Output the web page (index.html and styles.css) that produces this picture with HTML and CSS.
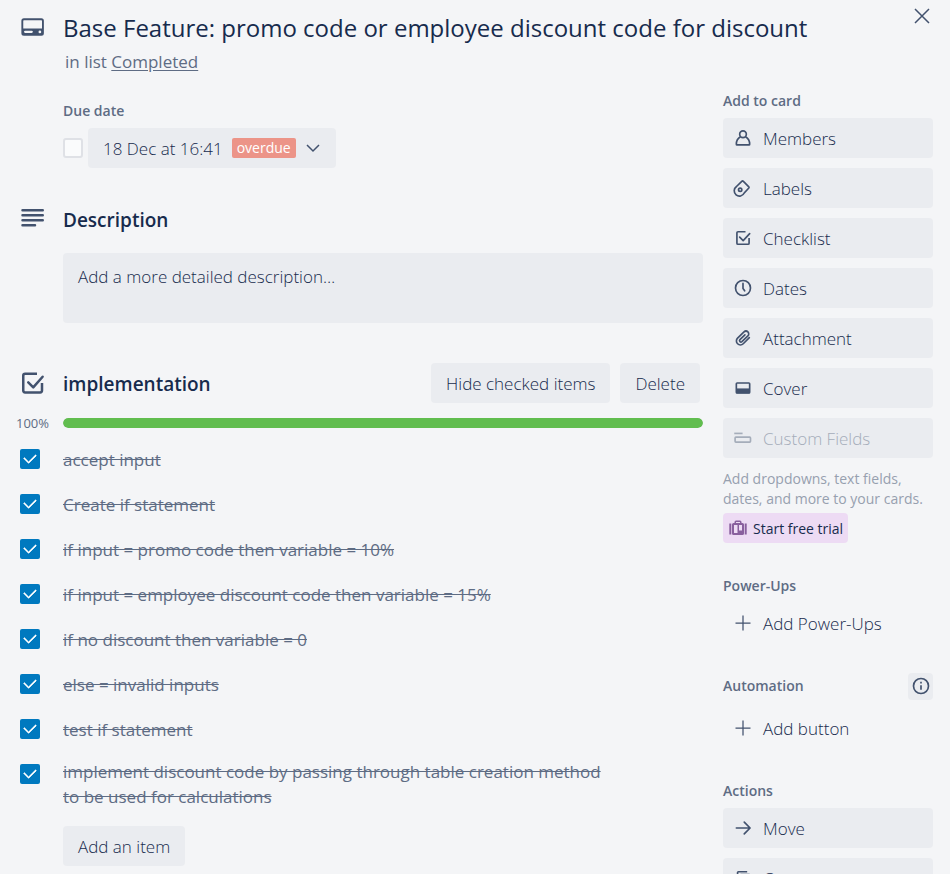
FILE: index.html
```html
<!DOCTYPE html>
<html lang="en">
<head>
<meta charset="utf-8">
<meta name="viewport" content="width=device-width, initial-scale=1">
<title>Base Feature: promo code or employee discount code for discount</title>
<link rel="stylesheet" href="styles.css">
</head>
<body>
<div class="card">
  <header class="card-header">
    <svg class="icon-lg" viewBox="0 0 24 24" aria-hidden="true"><path fill="currentColor" fill-rule="evenodd" d="M5.500 5a2 2 0 0 0-2 2v10a2 2 0 0 0 2 2h14a2 2 0 0 0 2-2V7a2 2 0 0 0-2-2h-14Zm0 1.600h14a.5.5 0 0 1 .5.5v6.100H5V7.100a.5.5 0 0 1 .5-.5ZM6.500 15h5.300a.9.900 0 0 1 0 1.800H6.500a.9.900 0 0 1 0-1.800Zm11.800-.2a1.100 1.100 0 1 1 0 2.200 1.100 1.100 0 0 1 0-2.200Z"/></svg>
    <div class="card-heading">
      <h1>Base Feature: promo code or employee discount code for discount</h1>
      <p class="in-list">in list <a href="#list">Completed</a></p>
    </div>
    <button class="close" type="button" aria-label="Close"><svg viewBox="0 0 16 16"><path d="M1 1l14 14M15 1L1 15"/></svg></button>
  </header>

  <div class="card-body">
    <main class="main">
      <section class="due">
        <h3 class="label">Due date</h3>
        <div class="due-row">
          <input class="check" type="checkbox" aria-label="Mark due date complete">
          <button class="btn due-btn" type="button">18 Dec at 16:41 <span class="badge">overdue</span>
            <svg class="chevron" viewBox="0 0 16 16" aria-hidden="true"><path d="M2 5l6 6 6-6"/></svg></button>
        </div>
      </section>

      <section class="description">
        <div class="section-head">
          <svg class="icon-lg" viewBox="0 0 24 24" aria-hidden="true"><path class="stroke round" d="M4.400 5h16.200M4.400 9h16.200M4.400 13h16.200M4.400 17h10"/></svg>
          <h2><label for="description">Description</label></h2>
        </div>
        <textarea id="description" placeholder="Add a more detailed description…"></textarea>
      </section>

      <section class="checklist">
        <div class="section-head">
          <svg class="icon-lg" viewBox="0 0 24 24" aria-hidden="true"><path class="stroke" d="M16 4.500H6.500A1.500 1.500 0 0 0 5 6v12a1.500 1.500 0 0 0 1.500 1.500h12A1.500 1.500 0 0 0 20 18v-6"/><path class="stroke round" d="M9 11.500l4 4L20.500 7"/></svg>
          <h2>implementation</h2>
          <div class="actions">
            <button class="btn" type="button">Hide checked items</button>
            <button class="btn" type="button">Delete</button>
          </div>
        </div>
        <div class="progress-row">
          <span class="percent">100%</span>
          <div class="track" role="progressbar" aria-label="Checklist progress" aria-valuenow="100"><div class="fill" style="width:100%"></div></div>
        </div>
        <ul class="items">
          <li><input class="check" id="i1" type="checkbox" checked><label for="i1">accept input</label></li>
          <li><input class="check" id="i2" type="checkbox" checked><label for="i2">Create if statement</label></li>
          <li><input class="check" id="i3" type="checkbox" checked><label for="i3">if input = promo code then variable = 10%</label></li>
          <li><input class="check" id="i4" type="checkbox" checked><label for="i4">if input = employee discount code then variable = 15%</label></li>
          <li><input class="check" id="i5" type="checkbox" checked><label for="i5">if no discount then variable = 0</label></li>
          <li><input class="check" id="i6" type="checkbox" checked><label for="i6">else = invalid inputs</label></li>
          <li><input class="check" id="i7" type="checkbox" checked><label for="i7">test if statement</label></li>
          <li class="long"><input class="check" id="i8" type="checkbox" checked><label for="i8">implement discount code by passing through table creation method to be used for calculations</label></li>
        </ul>
        <button class="btn add-item" type="button">Add an item</button>
      </section>
    </main>

    <aside class="sidebar">
      <section>
        <div class="side-head"><h3 class="label">Add to card</h3></div>
        <div class="stack">
          <button class="btn side-btn" type="button"><svg viewBox="0 0 24 24"><circle class="stroke" cx="12" cy="7.500" r="4"/><path class="stroke" d="M9 10.500C5.800 12.300 4 15.500 4 19.400q0 .8.800.800h14.400q.8 0 .8-.8c0-3.900-1.800-7.100-5-8.900"/></svg>Members</button>
          <button class="btn side-btn" type="button"><svg viewBox="0 0 24 24"><path class="stroke" d="M4.200 10.200L10.800 3.700q.7-.6 1.400 0l6.800 6.900q.6.700 0 1.400L13.500 18A6.300 6.300 0 1 1 4.200 10.200Z"/><circle class="stroke" cx="8.600" cy="14.200" r="2"/></svg>Labels</button>
          <button class="btn side-btn" type="button"><svg viewBox="0 0 24 24"><path class="stroke" d="M15 4.500H6A1.300 1.300 0 0 0 4.700 5.800v12.400A1.300 1.300 0 0 0 6 19.500h12a1.300 1.300 0 0 0 1.300-1.300V12"/><path class="stroke round" d="M8 11l4.200 4.200L20 6.700"/></svg>Checklist</button>
          <button class="btn side-btn" type="button"><svg viewBox="0 0 24 24"><circle class="stroke" cx="12" cy="12" r="9"/><path class="stroke round" d="M12 6.500v6l2 2.800"/></svg>Dates</button>
          <button class="btn side-btn" type="button"><svg viewBox="0 0 24 24"><path class="stroke round" d="M19.600 11.600l-7.300 7.300a4.800 4.800 0 0 1-6.800-6.800l7.700-7.400a3.300 3.300 0 0 1 4.700 4.700l-7.200 7a1.700 1.700 0 0 1-2.400-2.400l6-5.800"/></svg>Attachment</button>
          <button class="btn side-btn" type="button"><svg viewBox="0 0 24 24"><rect class="stroke" x="4" y="6" width="16" height="12" rx="1"/><path fill="currentColor" d="M4 12.500h16v6H4z"/></svg>Cover</button>
          <button class="btn side-btn" type="button" disabled><svg viewBox="0 0 24 24"><path class="stroke" d="M1.500 6.500h10"/><rect class="stroke" x="2.500" y="11" width="18.500" height="6" rx="1"/></svg>Custom Fields</button>
        </div>
        <p class="hint">Add dropdowns, text fields, dates, and more to your cards.</p>
        <button class="trial" type="button"><svg viewBox="0 0 20 18" aria-hidden="true"><path fill="currentColor" fill-rule="evenodd" d="M6.500 4V3q0-1.500 1.500-1.500h4q1.500 0 1.500 1.500v1h1q1.500 0 1.500 1.500v9q0 1.500-1.500 1.500h-9Q4 16 4 14.500v-9Q4 4 5.500 4h1ZM8 4h4V3H8v1ZM6 6v8H9.500V6H6Zm5 0v5.500h3V6H11Z"/><path class="stroke" d="M2.300 4.500v11M17.700 4.500v11"/></svg>Start free trial</button>
      </section>

      <section>
        <div class="side-head"><h3 class="label">Power-Ups</h3></div>
        <button class="btn side-btn plain" type="button"><svg viewBox="0 0 24 24"><path class="stroke thin" d="M12 3v18M3 12h18"/></svg>Add Power-Ups</button>
      </section>

      <section class="automation">
        <div class="side-head"><h3 class="label">Automation</h3>
          <button class="info" type="button" aria-label="About automation"><svg viewBox="0 0 24 24"><circle class="stroke" cx="12" cy="12" r="9"/><path class="stroke" d="M12 11v5.500M12 7v2"/></svg></button>
        </div>
        <button class="btn side-btn plain" type="button"><svg viewBox="0 0 24 24"><path class="stroke thin" d="M12 3v18M3 12h18"/></svg>Add button</button>
      </section>

      <section>
        <div class="side-head"><h3 class="label">Actions</h3></div>
        <div class="stack">
          <button class="btn side-btn" type="button"><svg viewBox="0 0 24 24"><path class="stroke round" d="M4 12h16M13.500 5l7 7-7 7"/></svg>Move</button>
          <button class="btn side-btn" type="button"><svg viewBox="0 0 24 24"><path class="stroke" d="M5.500 16V5.500q0-1 1-1H17"/><rect class="stroke" x="8.500" y="8" width="12" height="12" rx="1"/></svg>Copy</button>
        </div>
      </section>
    </aside>
  </div>
</div>
</body>
</html>
```
FILE: styles.css
```css
:root {
  --text: #172b4d;
  --muted: #5e6c84;
  --icon: #42526e;
  --surface: #eaecf0;
}

* { box-sizing: border-box; }

body {
  margin: 0;
  background: #f4f5f7;
  color: var(--text);
  font: 400 17px/25px "Open Sans", "Noto Sans", sans-serif;
}

h1, h2, h3, p, ul { margin: 0; padding: 0; }
ul { list-style: none; }

button, textarea {
  font: inherit;
  color: inherit;
  border: 0;
  margin: 0;
}

svg { display: block; flex: none; }

.stroke { fill: none; stroke: currentColor; stroke-width: 2; }
.round { stroke-linecap: round; stroke-linejoin: round; }
.thin { stroke-width: 1.5; }

.card {
  height: 100vh;
  overflow: hidden;
  padding: 0 17px 0 20px;
}

/* Header */
.card-header { display: flex; align-items: flex-start; padding-top: 12px; }

.icon-lg {
  width: 30px;
  height: 30px;
  margin: 0 16px 0 -3px;
  color: var(--icon);
}

.card-heading { flex: 1; min-width: 0; }

h1 { font-size: 24px; line-height: 32px; font-weight: 500; }

.in-list {
  margin-top: 5px;
  padding-left: 2px;
  color: var(--muted);
}
.in-list a { color: inherit; text-underline-offset: 2px; }

.close { padding: 0; background: none; color: var(--icon); }
.close svg {
  width: 16px;
  height: 16px;
  margin: -4px 3px 0 0;
  fill: none;
  stroke: currentColor;
  stroke-width: 1.5;
}

/* Columns */
.card-body { display: flex; align-items: flex-start; gap: 20px; padding-top: 12px; }
.main { flex: 1; min-width: 0; padding-top: 15px; }
.sidebar { width: 210px; display: flex; flex-direction: column; gap: 28px; }

.label { font-size: 14px; line-height: 20px; font-weight: 600; color: var(--muted); }

.btn {
  height: 40px;
  padding: 0 15px;
  border-radius: 4px;
  background: var(--surface);
  font-weight: 300;
  white-space: nowrap;
}

.check {
  appearance: none;
  flex: none;
  display: grid;
  place-items: center;
  width: 20px;
  height: 20px;
  margin: 0;
  border: 2px solid #dfe1e6;
  border-radius: 3px;
  background: #fafbfc;
}
.check:checked { border: 0; border-radius: 2px; background: #0079bf; }
.check:checked::after {
  content: "";
  width: 10px;
  height: 6px;
  margin-bottom: 4px;
  border: solid #fff;
  border-width: 0 0 2px 2px;
  border-radius: 1px;
  transform: rotate(-45deg);
}

/* Due date */
.due { margin-left: 43px; }
.due-row { display: flex; align-items: center; gap: 5px; margin-top: 7px; }
.due-btn { display: flex; align-items: center; gap: 9px; }
.badge {
  padding: 0 5px;
  border-radius: 2px;
  background: #ec9488;
  color: #fff;
  font-size: 14px;
  font-weight: 400;
  line-height: 20px;
}
.chevron {
  width: 16px;
  height: 16px;
  fill: none;
  stroke: var(--icon);
  stroke-width: 1.5;
}

/* Sections */
.section-head { display: flex; align-items: center; min-height: 40px; }
h2 { flex: 1; padding-top: 2px; font-size: 19px; line-height: 25px; font-weight: 600; }
.actions { display: flex; gap: 10px; margin-right: 3px; }

.description { margin-top: 31px; }
.description textarea {
  display: block;
  width: calc(100% - 43px);
  height: 70px;
  margin: 14px 0 0 43px;
  padding: 11px 15px;
  border-radius: 4px;
  background: var(--surface);
  font-weight: 300;
  resize: none;
}
.description textarea::placeholder { color: var(--text); opacity: 1; }

.checklist { margin-top: 40px; }
.progress-row { display: flex; align-items: center; margin-top: 10px; height: 20px; }
.percent { width: 43px; margin-left: -4px; margin-right: 4px; font-size: 13px; color: var(--muted); }
.track { flex: 1; height: 10px; border-radius: 5px; background: #dfe1e6; overflow: hidden; }
.fill { height: 100%; background: #61bd4f; border-radius: 5px; }

.items { padding-top: 16px; }
.items li { display: flex; gap: 23px; min-height: 45px; padding-right: 90px; }
.items label { margin-top: -2px; color: var(--muted); text-decoration: line-through; }
.items .long label { margin-top: -5px; }
.items .long { min-height: 62px; }
.add-item { margin-left: 43px; }

/* Sidebar */
.side-head { display: flex; align-items: center; justify-content: space-between; height: 30px; margin-bottom: 2px; }
.automation .side-head { margin-bottom: 7px; }
.stack { display: flex; flex-direction: column; gap: 10px; }

.side-btn { display: flex; align-items: center; gap: 10px; width: 100%; padding: 0 10px; text-align: left; }
.side-btn svg { width: 20px; height: 20px; color: var(--icon); }
.side-btn:disabled, .side-btn:disabled svg { color: #a5adba; }
.plain { background: none; }

.hint { margin-top: 11px; font-size: 14px; line-height: 20px; color: #97a0af; }

.trial {
  display: flex;
  align-items: center;
  gap: 5px;
  height: 30px;
  margin-top: 4px;
  padding: 0 5px;
  border-radius: 4px;
  background: #eddbf4;
  font-size: 14px;
}
.trial svg { width: 20px; height: 18px; color: #89609e; }

.info {
  display: grid;
  place-items: center;
  width: 25px;
  height: 27px;
  padding: 0;
  border-radius: 4px;
  background: var(--surface);
  color: var(--icon);
}
.info svg { width: 20px; height: 20px; }
```
